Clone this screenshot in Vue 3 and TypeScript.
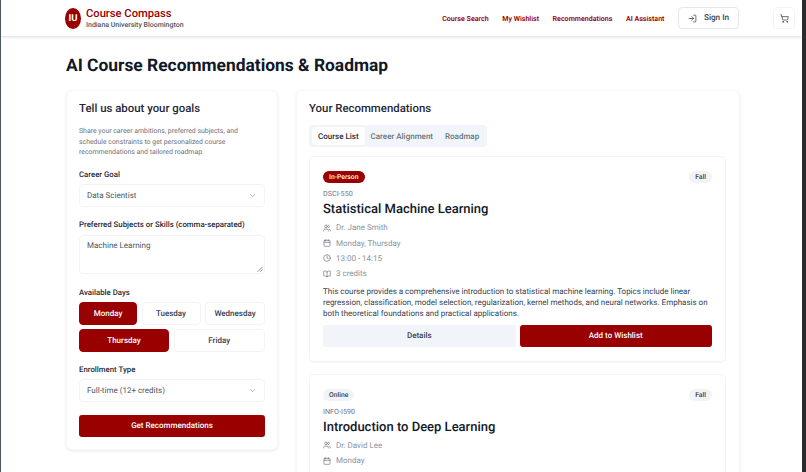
<template>
  <div class="frame">
    <div class="page">
      <header class="topbar">
        <div class="topbar-inner">
          <div class="brand">
            <div class="logo">IU</div>
            <div>
              <div class="brand-name">Course Compass</div>
              <div class="brand-sub">Indiana University Bloomington</div>
            </div>
          </div>
          <nav class="nav">
            <a v-for="item in navItems" :key="item">{{ item }}</a>
            <button class="signin">
              <svg viewBox="0 0 24 24" class="ico-signin"><path d="M15 3h4a2 2 0 0 1 2 2v14a2 2 0 0 1-2 2h-4" /><path d="m10 17 5-5-5-5" /><path d="M15 12H3" /></svg>
              Sign In
            </button>
          </nav>
          <button class="cart">
            <svg viewBox="0 0 24 24"><circle cx="8" cy="21" r="1" /><circle cx="19" cy="21" r="1" /><path d="M2.05 2.05h2l2.66 12.42a2 2 0 0 0 2 1.58h9.78a2 2 0 0 0 1.95-1.57l1.65-7.43H5.12" /></svg>
          </button>
        </div>
      </header>

      <main class="content">
        <h1>AI Course Recommendations &amp; Roadmap</h1>
        <div class="columns">
          <section class="card form-card">
            <h2>Tell us about your goals</h2>
            <p class="intro">Share your career ambitions, preferred subjects, and schedule constraints to get personalized course recommendations and tailored roadmap.</p>

            <label>Career Goal</label>
            <div class="select">
              <span>Data Scientist</span>
              <svg viewBox="0 0 24 24"><path d="m6 9 6 6 6-6" /></svg>
            </div>

            <label>Preferred Subjects or Skills (comma-separated)</label>
            <div class="textarea">
              Machine Learning
              <svg class="grip" viewBox="0 0 8 8"><path d="M7.5 1 1 7.5M7.5 4.5 4.5 7.5" /></svg>
            </div>

            <label>Available Days</label>
            <div class="days">
              <div class="day-row first">
                <button v-for="d in daysTop" :key="d.name" :class="['day', { on: d.on }]">{{ d.name }}</button>
              </div>
              <div class="day-row second">
                <button v-for="d in daysBottom" :key="d.name" :class="['day', { on: d.on }]">{{ d.name }}</button>
              </div>
            </div>

            <label>Enrollment Type</label>
            <div class="select">
              <span>Full-time (12+ credits)</span>
              <svg viewBox="0 0 24 24"><path d="m6 9 6 6 6-6" /></svg>
            </div>

            <button class="primary get">Get Recommendations</button>
          </section>

          <section class="card results">
            <h2>Your Recommendations</h2>
            <div class="tabs">
              <span v-for="(t, i) in tabs" :key="t" :class="['tab', { active: i === 0 }]">{{ t }}</span>
            </div>

            <article v-for="c in courses" :key="c.code" class="course">
              <div class="badges">
                <span :class="['badge', c.inPerson ? 'red' : 'grey']">{{ c.mode }}</span>
                <span class="badge grey">Fall</span>
              </div>
              <div class="code">{{ c.code }}</div>
              <h3>{{ c.title }}</h3>
              <div class="meta">
                <svg viewBox="0 0 24 24"><path d="M16 21v-2a4 4 0 0 0-4-4H6a4 4 0 0 0-4 4v2" /><circle cx="9" cy="7" r="4" /><path d="M22 21v-2a4 4 0 0 0-3-3.87" /><path d="M16 3.13a4 4 0 0 1 0 7.75" /></svg>
                {{ c.teacher }}
              </div>
              <div class="meta">
                <svg viewBox="0 0 24 24"><path d="M8 2v4" /><path d="M16 2v4" /><rect x="3" y="4" width="18" height="18" rx="2" /><path d="M3 10h18" /></svg>
                {{ c.days }}
              </div>
              <template v-if="c.inPerson">
                <div class="meta">
                  <svg viewBox="0 0 24 24"><circle cx="12" cy="12" r="10" /><path d="M12 6v6l4 2" /></svg>
                  13:00 - 14:15
                </div>
                <div class="meta">
                  <svg viewBox="0 0 24 24"><path d="M12 7v14" /><path d="M3 18a1 1 0 0 1-1-1V4a1 1 0 0 1 1-1h5a4 4 0 0 1 4 4 4 4 0 0 1 4-4h5a1 1 0 0 1 1 1v13a1 1 0 0 1-1 1h-6a3 3 0 0 0-3 3 3 3 0 0 0-3-3z" /></svg>
                  3 credits
                </div>
                <p class="desc">This course provides a comprehensive introduction to statistical machine learning. Topics include linear regression, classification, model selection, regularization, kernel methods, and neural networks. Emphasis on both theoretical foundations and practical applications.</p>
                <div class="actions">
                  <button class="details">Details</button>
                  <button class="primary wish">Add to Wishlist</button>
                </div>
              </template>
            </article>
          </section>
        </div>
      </main>
    </div>
  </div>
</template>

<script setup lang="ts">
const navItems = ['Course Search', 'My Wishlist', 'Recommendations', 'AI Assistant']
const tabs = ['Course List', 'Career Alignment', 'Roadmap']

const daysTop = [
  { name: 'Monday', on: true },
  { name: 'Tuesday', on: false },
  { name: 'Wednesday', on: false },
]
const daysBottom = [
  { name: 'Thursday', on: true },
  { name: 'Friday', on: false },
]

const courses = [
  {
    code: 'DSCI-550',
    title: 'Statistical Machine Learning',
    mode: 'In-Person',
    inPerson: true,
    teacher: 'Dr. Jane Smith',
    days: 'Monday, Thursday',
  },
  {
    code: 'INFO-I590',
    title: 'Introduction to Deep Learning',
    mode: 'Online',
    inPerson: false,
    teacher: 'Dr. David Lee',
    days: 'Monday',
  },
]
</script>

<style>
html,
body {
  margin: 0;
  overflow: hidden;
  background: #fff;
}
</style>

<style scoped>
.frame {
  width: 806px;
  height: 472px;
  box-sizing: border-box;
  border-left: 1px solid #4b5563;
  border-right: 4px solid #2b2b2e;
  overflow: hidden;
  background: #fff;
  font-family: Roboto, 'Noto Sans', sans-serif;
  text-rendering: geometricPrecision;
  color: #111827;
}

.page {
  height: 100%;
  overflow: hidden;
}

button {
  font-family: inherit;
  text-rendering: inherit;
  cursor: pointer;
}

.topbar {
  height: 36px;
  box-shadow: 0 1px 3px rgba(0, 0, 0, 0.14);
  position: relative;
  background: #fff;
}

.topbar-inner {
  display: flex;
  align-items: center;
  height: 100%;
  padding: 0 7px 0 64px;
}

.brand {
  display: flex;
  align-items: center;
  gap: 5px;
}

.logo {
  width: 16px;
  height: 21px;
  border-radius: 50%;
  background: #990000;
  color: #fff;
  font-size: 9.5px;
  font-weight: 700;
  display: flex;
  align-items: center;
  justify-content: center;
}

.brand-name {
  font-size: 11.2px;
  font-weight: 500;
  line-height: 13px;
  color: #990000;
}

.brand-sub {
  font-size: 7px;
  font-weight: 500;
  line-height: 10px;
  color: #4b5563;
}

.nav {
  margin-left: auto;
  display: flex;
  align-items: center;
  gap: 13.5px;
}

.nav a {
  font-size: 7.1px;
  font-weight: 600;
  color: #990000;
}

.signin {
  width: 61px;
  height: 22px;
  display: flex;
  align-items: center;
  justify-content: center;
  gap: 7px;
  padding: 0;
  border: 1px solid #e5e7eb;
  border-radius: 4px;
  background: #fff;
  color: #374151;
  font-size: 8.2px;
  font-weight: 500;
}

.ico-signin,
.cart svg,
.select svg,
.meta svg {
  fill: none;
  stroke: currentColor;
  stroke-width: 2;
  stroke-linecap: round;
  stroke-linejoin: round;
}

.ico-signin {
  width: 9px;
  height: 9px;
}

.cart {
  width: 22px;
  height: 22px;
  margin-left: 34px;
  padding: 0;
  display: flex;
  align-items: center;
  justify-content: center;
  background: #fff;
  border: 1px solid #f3f4f6;
  border-radius: 4px;
  color: #374151;
}

.cart svg {
  width: 9px;
  height: 9px;
}

.content {
  padding: 19px 0 0 65px;
  width: 675px;
}

h1 {
  margin: 0 0 13px;
  font-size: 17.4px;
  line-height: 22px;
  font-weight: 700;
  color: #111827;
}

.columns {
  display: flex;
  align-items: flex-start;
  gap: 18px;
}

.card {
  box-sizing: border-box;
  background: #fff;
  border-radius: 6px;
  box-shadow: 0 1px 3px rgba(0, 0, 0, 0.09);
  border: 1px solid #f6f7f8;
}

.form-card {
  width: 212px;
  height: 360px;
  padding: 10px 12px 0;
}

.card h2 {
  margin: 0;
  font-size: 11.4px;
  line-height: 14px;
  font-weight: 500;
  color: #1f2937;
}

.intro {
  margin: 11px 0 12px;
  font-size: 6.9px;
  line-height: 10.6px;
  color: #6b7280;
}

label {
  display: block;
  font-size: 7.8px;
  line-height: 10px;
  font-weight: 500;
  color: #1f2937;
  margin-bottom: 4px;
}

.select {
  box-sizing: border-box;
  height: 23px;
  border: 1px solid #f1f3f5;
  border-radius: 4px;
  display: flex;
  align-items: center;
  justify-content: space-between;
  padding: 0 7px;
  font-size: 8px;
  color: #4b5563;
  margin-bottom: 13px;
}

.select svg {
  width: 9px;
  height: 9px;
  color: #9ca3af;
}

.textarea {
  position: relative;
  box-sizing: border-box;
  height: 39px;
  border: 1px solid #f1f3f5;
  border-radius: 4px;
  margin-top: 5px;
  padding: 5px 7px;
  font-size: 8px;
  line-height: 10px;
  color: #4b5563;
  margin-bottom: 14px;
}

.grip {
  position: absolute;
  right: 1px;
  bottom: 1px;
  width: 6px;
  height: 6px;
  fill: none;
  stroke: #6b7280;
  stroke-width: 1;
}

.days {
  display: flex;
  flex-direction: column;
  gap: 4px;
  margin-bottom: 13px;
}

.day-row {
  display: grid;
  gap: 4.5px;
}

.first {
  grid-template-columns: 58px 59px 60px;
}

.second {
  grid-template-columns: 90px 91.5px;
}

.day {
  height: 23px;
  padding: 0;
  border: 1px solid #f1f3f5;
  border-radius: 4px;
  background: #fff;
  color: #374151;
  font-size: 8px;
  font-weight: 500;
}

.day.on {
  background: #990000;
  border-color: #990000;
  color: #fff;
}

.primary {
  display: block;
  border: none;
  border-radius: 3px;
  background: #990000;
  color: #fff;
  font-weight: 500;
  padding: 0;
}

.get {
  width: 100%;
  height: 22px;
  font-size: 8px;
}

.results {
  width: 444px;
  height: 400px;
  padding: 10px 12px 0;
  border-bottom: none;
}

.tabs {
  display: flex;
  width: fit-content;
  margin-top: 10px;
  margin-bottom: 9px;
  padding: 2px 2px 2px 3px;
  height: 22px;
  box-sizing: border-box;
  background: #f1f5f9;
  border-radius: 4px;
}

.tab {
  display: flex;
  align-items: center;
  padding: 0 6px;
  border-radius: 3px;
  font-size: 8px;
  font-weight: 500;
  color: #6b7280;
}

.tab.active {
  background: #fff;
  color: #1f2937;
}

.course {
  box-sizing: border-box;
  width: 417px;
  border: 1px solid #f1f3f5;
  border-radius: 5px;
  padding: 14px 13px;
  margin-bottom: 12px;
  box-shadow: 0 1px 1px rgba(0, 0, 0, 0.03);
}

.badges {
  display: flex;
  justify-content: space-between;
  align-items: center;
}

.badge {
  height: 12px;
  padding: 0 6px;
  border-radius: 6px;
  font-size: 6.8px;
  line-height: 12px;
  font-weight: 500;
}

.red {
  background: #990000;
  color: #fff;
}

.grey {
  background: #f1f3f5;
  color: #374151;
}

.code {
  margin-top: 6px;
  font-size: 7.2px;
  line-height: 10px;
  color: #6b7280;
}

h3 {
  margin: 2px 0 1px;
  font-size: 13px;
  line-height: 18px;
  font-weight: 500;
  color: #111827;
}

.meta {
  display: flex;
  align-items: center;
  gap: 5px;
  height: 15.4px;
  font-size: 8px;
  color: #8a93a0;
}

.meta svg {
  width: 8px;
  height: 8px;
  color: #6b7280;
}

.desc {
  margin: 4px 0 6px;
  font-size: 8px;
  line-height: 11px;
  color: #374151;
}

.actions {
  display: grid;
  grid-template-columns: 1fr 1fr;
  gap: 4px;
}

.details {
  height: 22px;
  border: none;
  border-radius: 3px;
  background: #f1f5f9;
  color: #374151;
  font-size: 8px;
  font-weight: 500;
  padding: 0;
}

.wish {
  height: 22px;
  font-size: 8px;
}
</style>
